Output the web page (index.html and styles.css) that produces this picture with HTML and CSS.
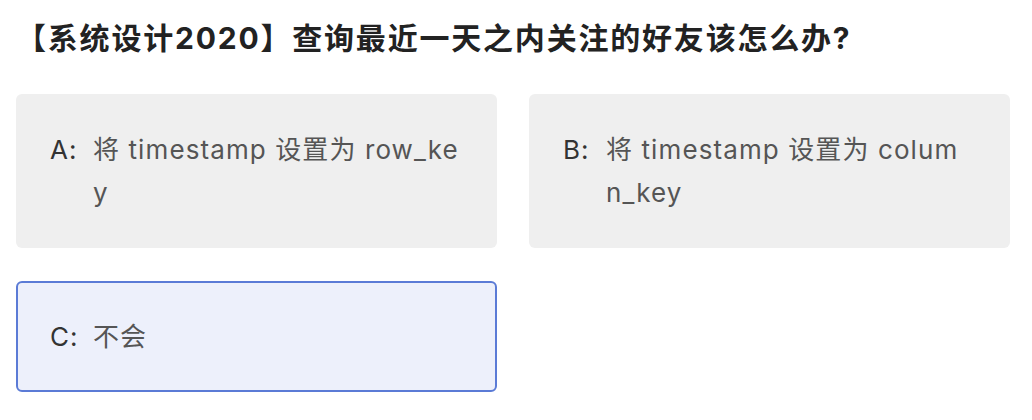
FILE: index.html
```html
<!DOCTYPE html>
<html lang="zh-CN">
<head>
<meta charset="utf-8">
<link rel="stylesheet" href="styles.css">
</head>
<body>
<div class="page">
  <h1 class="title">【系统设计2020】查询最近一天之内关注的好友该怎么办?</h1>
  <div class="options">
    <div class="option">
      <span class="label">A:</span>
      <span class="text">将 timestamp 设置为 row_key</span>
    </div>
    <div class="option">
      <span class="label">B:</span>
      <span class="text">将 timestamp 设置为 column_key</span>
    </div>
    <div class="option selected">
      <span class="label">C:</span>
      <span class="text">不会</span>
    </div>
  </div>
</div>
</body>
</html>
```
FILE: styles.css
```css
html, body {
  margin: 0;
  padding: 0;
  background: #ffffff;
}
.page {
  width: 994px;
  padding: 17px 0 0 16px;
  font-family: Inter, "Noto Sans CJK SC", sans-serif;
}
.title {
  margin: 0 0 35px 0;
  font-size: 30px;
  line-height: 42px;
  font-weight: 700;
  letter-spacing: 1.8px;
  color: #222222;
}
.options {
  display: grid;
  grid-template-columns: 1fr 1fr;
  column-gap: 32px;
  row-gap: 33px;
}
.option {
  display: flex;
  align-items: flex-start;
  background: #efefef;
  border-radius: 6px;
  padding: 34px 37.5px 34px 34px;
  font-size: 26px;
  line-height: 43px;
  letter-spacing: 1.1px;
  color: #555555;
  word-break: break-all;
}
.option.selected {
  background: #edf0fb;
  border: 2px solid #5b7bd6;
  padding: 32px 35.5px 32px 32px;
}
.label {
  flex: none;
  width: 43px;
  color: #333333;
}
.text {
  flex: 1;
  min-width: 0;
}
```
